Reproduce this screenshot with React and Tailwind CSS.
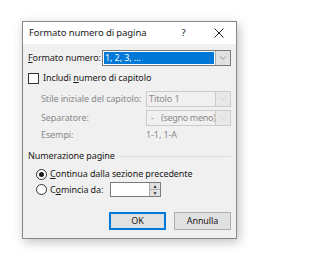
import { ChevronDown } from 'lucide-react'

const Sel = ({ text, disabled, selected, className = '' }) => (
  <div className={`flex h-[16px] min-w-0 items-stretch overflow-hidden border ${disabled ? 'border-[#cccccc] bg-[#f0f0f0]' : 'border-[#7a7a7a] bg-white'} ${className}`}>
    <div className="flex min-w-0 flex-1 items-center p-[1px]">
      <span className={`flex h-full flex-1 items-center pl-[1px] ${selected ? 'bg-[#0078d7] text-white' : disabled ? 'text-[#8a8a8a]' : ''}`}>{text}</span>
    </div>
    <div className={`flex w-[15px] shrink-0 items-center justify-center border-l ${disabled ? 'border-[#cccccc] bg-[#e8e8e8] text-[#bdbdbd]' : 'border-[#adadad] bg-[#e1e1e1] text-[#606060]'}`}>
      <ChevronDown size={10} strokeWidth={1.5} />
    </div>
  </div>
)

const Radio = ({ checked }) => (
  <span className="flex h-[11px] w-[11px] shrink-0 items-center justify-center rounded-full border border-[#333] bg-white">
    {checked && <span className="h-[5px] w-[5px] rounded-full bg-[#1a1a1a]" />}
  </span>
)

export default function App() {
  return (
    <div className="h-[280px] w-[320px] whitespace-nowrap bg-white pl-[22px] pt-[21px] text-[9px] leading-[12px] tracking-[-0.1px] text-[#1a1a1a]" style={{ fontFamily: '"Noto Sans", "Open Sans", sans-serif' }}>
      <div className="flex w-[215px] flex-col border border-[#888] bg-[#f0f0f0] shadow-[2px_3px_10px_rgba(0,0,0,0.25)]">
        <div className="flex h-[22px] items-center bg-white pl-[6px] text-[9.5px]">
          <span className="flex-1">Formato numero di pagina</span>
          <span className="w-[35px] text-center">?</span>
          <span className="flex w-[35px] justify-center">
            <svg width="10" height="10" viewBox="0 0 10 10" stroke="#222" strokeWidth="1">
              <path d="M0.5 0.5 L9.5 9.5 M9.5 0.5 L0.5 9.5" />
            </svg>
          </span>
        </div>
        <div className="flex flex-col px-[5px] pt-[6px] pb-[8px]">
          <div className="flex items-center">
            <span className="w-[74px] shrink-0"><u>F</u>ormato numero:</span>
            <Sel text="1, 2, 3, …" selected className="flex-1" />
          </div>
          <div className="mt-[6px] flex items-center gap-[4px]">
            <span className="h-[11px] w-[11px] border border-[#333] bg-white" />
            <span>Includi <u>n</u>umero di capitolo</span>
          </div>
          <div className="mt-[7px] flex flex-col gap-[3px] pl-[13px] text-[#8a8a8a]">
            <div className="flex items-center">
              <span className="w-[105px] shrink-0">Stile iniziale del capitolo:</span>
              <Sel text="Titolo 1" disabled className="flex-1" />
            </div>
            <div className="flex items-center">
              <span className="w-[105px] shrink-0">Separatore:</span>
              <Sel text={<><span className="w-[12px] shrink-0 pl-[2px]">-</span><span className="tracking-[-0.3px]">(segno meno)</span></>} disabled className="flex-1" />
            </div>
            <div className="flex h-[12px] items-center">
              <span className="w-[105px] shrink-0">Esempi:</span>
              <span>1-1, 1-A</span>
            </div>
          </div>
          <div className="mt-[9px] flex items-center gap-[4px]">
            <span>Numerazione pagine</span>
            <span className="h-px flex-1 bg-[#dcdcdc]" />
          </div>
          <div className="mt-[5px] flex flex-col gap-[1px] pl-[8px]">
            <div className="flex h-[14px] items-center gap-[3px]">
              <Radio checked />
              <span><u>C</u>ontinua dalla sezione precedente</span>
            </div>
            <div className="flex items-center gap-[3px]">
              <Radio />
              <span className="w-[57px] shrink-0">C<u>o</u>mincia da:</span>
              <div className="flex h-[15px] w-[51px] border border-[#7a7a7a] bg-white">
                <span className="flex-1" />
                <div className="flex w-[11px] flex-col border-l border-[#adadad] bg-[#e1e1e1] text-[5px] leading-none text-[#333]">
                  <span className="flex flex-1 items-center justify-center border-b border-[#adadad]">▲</span>
                  <span className="flex flex-1 items-center justify-center">▼</span>
                </div>
              </div>
            </div>
          </div>
          <div className="mt-[15px] flex justify-end gap-[8px]">
            <button className="h-[18px] w-[57px] border-2 border-[#0078d7] bg-[#e1e1e1]">OK</button>
            <button className="h-[18px] w-[57px] border border-[#adadad] bg-[#e1e1e1]">Annulla</button>
          </div>
        </div>
      </div>
    </div>
  )
}
